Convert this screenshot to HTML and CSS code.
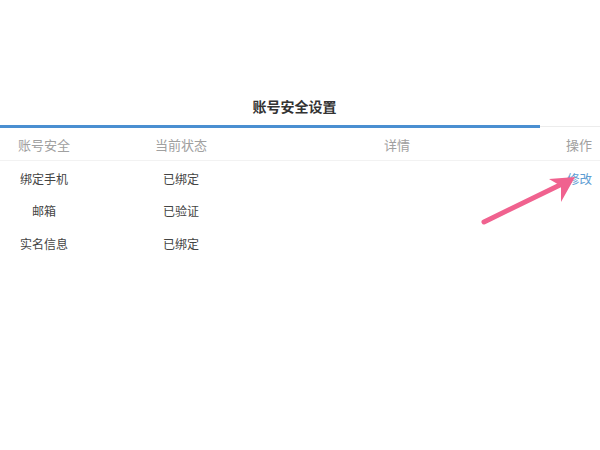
FILE: index.html
```html
<!DOCTYPE html>
<html lang="zh-CN">
<head>
<meta charset="utf-8">
<title>账号安全设置</title>
<link rel="stylesheet" href="styles.css">
</head>
<body>
<div class="page">
  <h1 class="title">账号安全设置</h1>
  <div class="tabbar"><div class="tab-active"></div><div class="tab-rest"></div></div>
  <div class="table">
    <div class="row head">
      <div class="c1">账号安全</div>
      <div class="c2">当前状态</div>
      <div class="c3">详情</div>
      <div class="c4">操作</div>
    </div>
    <div class="row body first">
      <div class="c1">绑定手机</div>
      <div class="c2">已绑定</div>
      <div class="c3"></div>
      <div class="c4"><a class="link">修改</a></div>
    </div>
    <div class="row body">
      <div class="c1">邮箱</div>
      <div class="c2">已验证</div>
      <div class="c3"></div>
      <div class="c4"></div>
    </div>
    <div class="row body">
      <div class="c1">实名信息</div>
      <div class="c2">已绑定</div>
      <div class="c3"></div>
      <div class="c4"></div>
    </div>
  </div>
  <svg class="arrow" width="600" height="450" viewBox="0 0 600 450">
    <line x1="484" y1="222" x2="562" y2="184" stroke="#f0628f" stroke-width="5" stroke-linecap="round"/>
    <polygon points="575,177 549,179 561,186 561,202" fill="#f0628f"/>
  </svg>
</div>
</body>
</html>
```
FILE: styles.css
```css
html, body {
  margin: 0;
  padding: 0;
  background: #ffffff;
}
.page {
  position: relative;
  width: 600px;
  height: 450px;
  padding-top: 96px;
  box-sizing: border-box;
  font-family: "Noto Sans CJK SC", "Noto Sans", sans-serif;
}
.title {
  margin: 0;
  padding-right: 11px;
  font-size: 14px;
  line-height: 20px;
  font-weight: bold;
  color: #333333;
  text-align: center;
}
.tabbar {
  margin-top: 9px;
  display: flex;
  align-items: center;
  height: 3px;
}
.tab-active {
  width: 540px;
  height: 3px;
  background: #4a8fd1;
}
.tab-rest {
  flex: 1;
  height: 1px;
  background: #ececec;
}
.row {
  display: grid;
  grid-template-columns: 88px 186px 246px 1fr;
  align-items: center;
  text-align: center;
}
.row .c4 {
  text-align: right;
  padding-right: 8px;
}
.head {
  height: 32px;
  font-size: 13px;
  color: #a0a0a0;
  border-bottom: 1px solid #f2f2f2;
}
.body {
  height: 32.5px;
  font-size: 12px;
  color: #444444;
}
.body.first {
  margin-top: 1px;
}
.link {
  color: #5e9dd3;
  font-size: 12.5px;
}
.arrow {
  position: absolute;
  left: 0;
  top: 0;
  pointer-events: none;
}
```
